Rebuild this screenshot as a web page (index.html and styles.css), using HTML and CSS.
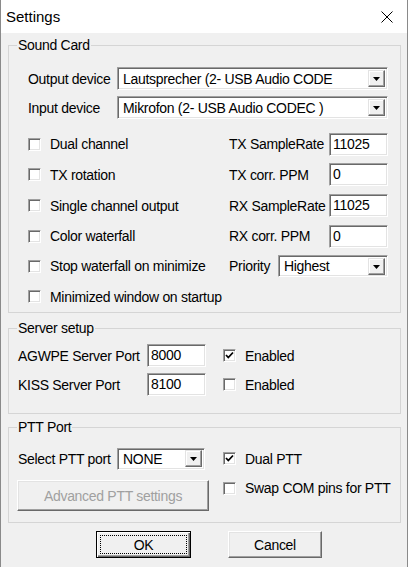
FILE: index.html
```html
<!DOCTYPE html>
<html>
<head>
<meta charset="utf-8">
<title>Settings</title>
<link rel="stylesheet" href="styles.css">
</head>
<body>
<div class="win">
  <div class="titlebar">
    <span class="title">Settings</span>
    <svg class="close" width="12" height="12" viewBox="0 0 12 12"><path d="M0.5 0.5 L11.5 11.5 M11.5 0.5 L0.5 11.5" stroke="#000" stroke-width="1" fill="none"/></svg>
  </div>
  <div class="client">
    <fieldset class="group sound">
      <legend>Sound Card</legend>
      <div class="sound-body">
        <div class="devrow">
          <span>Output device</span>
          <div class="combo"><span class="ctext">Lautsprecher (2- USB Audio CODE</span><span class="dbtn"><svg width="7" height="4" viewBox="0 0 7 4"><path d="M0 0H7L3.5 4Z" fill="#000"/></svg></span></div>
        </div>
        <div class="devrow">
          <span>Input device</span>
          <div class="combo"><span class="ctext">Mikrofon (2- USB Audio CODEC )</span><span class="dbtn"><svg width="7" height="4" viewBox="0 0 7 4"><path d="M0 0H7L3.5 4Z" fill="#000"/></svg></span></div>
        </div>
        <div class="opts">
          <label class="chk"><span class="box"></span>Dual channel</label>
          <div class="field"><span>TX SampleRate</span><span class="edit">11025</span></div>
          <label class="chk"><span class="box"></span>TX rotation</label>
          <div class="field"><span>TX corr. PPM</span><span class="edit">0</span></div>
          <label class="chk"><span class="box"></span>Single channel output</label>
          <div class="field"><span>RX SampleRate</span><span class="edit">11025</span></div>
          <label class="chk"><span class="box"></span>Color waterfall</label>
          <div class="field"><span>RX corr. PPM</span><span class="edit">0</span></div>
          <label class="chk"><span class="box"></span>Stop waterfall on minimize</label>
          <div class="field"><span>Priority</span><div class="combo prio"><span class="ctext">Highest</span><span class="dbtn"><svg width="7" height="4" viewBox="0 0 7 4"><path d="M0 0H7L3.5 4Z" fill="#000"/></svg></span></div></div>
          <label class="chk"><span class="box"></span>Minimized window on startup</label>
          <div></div>
        </div>
      </div>
    </fieldset>

    <fieldset class="group server">
      <legend>Server setup</legend>
      <div class="server-body">
        <span>AGWPE Server Port</span>
        <span class="edit">8000</span>
        <label class="chk"><span class="box"><svg width="9" height="9" viewBox="0 0 9 9"><path d="M1 4 L3.3 6.5 L8 1.5" stroke="#000" stroke-width="1.8" fill="none"/></svg></span>Enabled</label>
        <span>KISS Server Port</span>
        <span class="edit">8100</span>
        <label class="chk"><span class="box"></span>Enabled</label>
      </div>
    </fieldset>

    <fieldset class="group ptt">
      <legend>PTT Port</legend>
      <div class="ptt-body">
        <div class="pttsel">
          <span class="pttlabel">Select PTT port</span>
          <div class="combo pttcombo"><span class="ctext">NONE</span><span class="dbtn"><svg width="7" height="4" viewBox="0 0 7 4"><path d="M0 0H7L3.5 4Z" fill="#000"/></svg></span></div>
        </div>
        <label class="chk"><span class="box"><svg width="9" height="9" viewBox="0 0 9 9"><path d="M1 4 L3.3 6.5 L8 1.5" stroke="#000" stroke-width="1.8" fill="none"/></svg></span>Dual PTT</label>
        <button class="btn adv" disabled>Advanced PTT settings</button>
        <label class="chk top"><span class="box"></span>Swap COM pins for PTT</label>
      </div>
    </fieldset>

    <div class="buttons">
      <button class="btn ok"><span class="focus">OK</span></button>
      <button class="btn cancel">Cancel</button>
    </div>
  </div>
</div>
</body>
</html>
```
FILE: styles.css
```css
* { box-sizing: border-box; }
html, body { margin: 0; padding: 0; }
body {
  width: 408px;
  height: 567px;
  overflow: hidden;
  background: #f0f0f0;
  font-family: "Liberation Sans", Arial, sans-serif;
  font-size: 14px;
  letter-spacing: -0.3px;
  color: #000;
  white-space: nowrap;
}
.win {
  width: 408px;
  height: 567px;
  border-left: 1px solid #8a8a8a;
  border-right: 1px solid #8a8a8a;
  background: #f0f0f0;
  display: flex;
  flex-direction: column;
}
.titlebar {
  height: 33px;
  flex: none;
  background: #fff;
  display: flex;
  align-items: center;
  justify-content: space-between;
  padding: 0 14px 0 5px;
}
.title { font-size: 15px; letter-spacing: 0; }
.close { display: block; }
.client {
  display: flex;
  flex-direction: column;
  padding-top: 4px;
}
.group {
  margin: 0 6px 0 7px;
  padding: 0;
  border: 1px solid #d5d5d5;
  min-width: 0;
}
.group legend {
  margin-left: 8px;
  padding: 0 1px;
  line-height: 16px;
}
.server { margin-top: 7px; }
.ptt { margin-top: 5px; }

.sound-body { padding: 11px 12px 0 19px; }
.devrow {
  display: grid;
  grid-template-columns: 89px 1fr;
  align-items: center;
  height: 29px;
}
.combo {
  height: 23px;
  display: flex;
  align-items: center;
  background: #fff;
  border: 1px solid;
  border-color: #a0a0a0 #fff #fff #a0a0a0;
  box-shadow: inset 1px 1px 0 #696969, inset -1px -1px 0 #e3e3e3;
  padding: 2px 2px 2px 5px;
  overflow: hidden;
}
.ctext { flex: 1; overflow: hidden; }
.dbtn {
  width: 17px;
  height: 17px;
  flex: none;
  background: #f0f0f0;
  border: 1px solid;
  border-color: #e3e3e3 #696969 #696969 #e3e3e3;
  box-shadow: inset -1px -1px 0 #a0a0a0, inset 1px 1px 0 #fff;
  display: flex;
  align-items: center;
  justify-content: center;
}
.dbtn svg { display: block; margin-top: 1px; }

.opts {
  margin-top: 7px;
  display: grid;
  grid-template-columns: 1fr 159px;
  grid-template-rows: 30px 31px 31px 30px 30px 31px;
  align-items: center;
}
.field {
  display: flex;
  justify-content: space-between;
  align-items: center;
}
.edit {
  display: block;
  width: 59px;
  height: 23px;
  background: #fff;
  border: 1px solid;
  border-color: #a0a0a0 #fff #fff #a0a0a0;
  box-shadow: inset 1px 1px 0 #696969, inset -1px -1px 0 #e3e3e3;
  padding: 2px 3px;
  line-height: 17px;
}
.prio { width: 110px; height: 22px; }

.chk {
  display: flex;
  align-items: center;
  gap: 9px;
  line-height: 16px;
}
.box {
  width: 13px;
  height: 13px;
  flex: none;
  background: #fff;
  border: 1px solid;
  border-color: #a0a0a0 #fff #fff #a0a0a0;
  box-shadow: inset 1px 1px 0 #696969, inset -1px -1px 0 #e3e3e3;
  display: flex;
  align-items: center;
  justify-content: center;
}
.box svg { display: block; }

.server-body {
  padding: 5px 0 14px 9px;
  display: grid;
  grid-template-columns: 129px 59px 1fr;
  grid-template-rows: 29px 29px;
  align-items: center;
}
.server-body .chk { margin-left: 17px; }

.ptt-body {
  padding: 9px 0 11px 8px;
  display: grid;
  grid-template-columns: 192px 1fr;
  grid-template-rows: 29px 31px;
  column-gap: 14px;
  row-gap: 7px;
  align-items: center;
}
.pttsel { display: flex; align-items: center; }
.pttlabel { width: 100px; padding-left: 1px; }
.pttcombo { width: 88px; height: 22px; }
.chk.top { align-self: start; }

.btn {
  font-family: "Liberation Sans", Arial, sans-serif;
  font-size: 14px;
  letter-spacing: -0.3px;
  color: #000;
  background: #f0f0f0;
  border: 1px solid;
  border-color: #fff #696969 #696969 #fff;
  box-shadow: inset -1px -1px 0 #a0a0a0, inset 1px 1px 0 #e3e3e3;
  padding: 0;
  margin: 0;
}
.adv {
  width: 192px;
  height: 31px;
  color: #a0a0a0;
}
.buttons {
  margin-top: 8px;
  display: flex;
  justify-content: center;
  gap: 37px;
  padding-left: 10px;
}
.ok {
  width: 95px;
  height: 27px;
  border: 1px solid #000;
  box-shadow: inset 1px 1px 0 #fff, inset -1px -1px 0 #696969, inset -2px -2px 0 #a0a0a0;
  padding: 3px;
  display: flex;
}
.focus {
  flex: 1;
  border: 1px dotted #000;
  display: flex;
  align-items: center;
  justify-content: center;
}
.cancel { width: 94px; height: 27px; }
```
